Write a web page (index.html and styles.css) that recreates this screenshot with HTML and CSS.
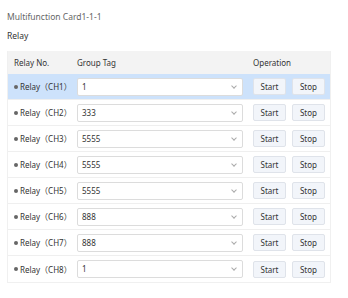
FILE: index.html
```html
<!doctype html>
<html lang="en">
  <head>
    <meta charset="UTF-8" />
    <meta name="viewport" content="width=device-width, initial-scale=1.0" />
    <title>Multifunction Card</title>
    <link rel="stylesheet" href="styles.css">
  </head>
  <body>
    <div class="page">
      <div class="title">Multifunction Card1-1-1</div>
      <div class="subtitle">Relay</div>

      <div class="relay-table">
        <div class="row head">
          <div class="c-no">Relay No.</div>
          <div class="c-tag">Group Tag</div>
          <div class="c-op">Operation</div>
        </div>

        <div class="row active">
          <div class="c-no"><span class="dot"></span>Relay（CH1）</div>
          <div class="c-tag"><div class="select">1<span class="arrow"></span></div></div>
          <div class="c-op"><button>Start</button><button>Stop</button></div>
        </div>
        <div class="row">
          <div class="c-no"><span class="dot"></span>Relay（CH2）</div>
          <div class="c-tag"><div class="select">333<span class="arrow"></span></div></div>
          <div class="c-op"><button>Start</button><button>Stop</button></div>
        </div>
        <div class="row">
          <div class="c-no"><span class="dot"></span>Relay（CH3）</div>
          <div class="c-tag"><div class="select">5555<span class="arrow"></span></div></div>
          <div class="c-op"><button>Start</button><button>Stop</button></div>
        </div>
        <div class="row">
          <div class="c-no"><span class="dot"></span>Relay（CH4）</div>
          <div class="c-tag"><div class="select">5555<span class="arrow"></span></div></div>
          <div class="c-op"><button>Start</button><button>Stop</button></div>
        </div>
        <div class="row">
          <div class="c-no"><span class="dot"></span>Relay（CH5）</div>
          <div class="c-tag"><div class="select">5555<span class="arrow"></span></div></div>
          <div class="c-op"><button>Start</button><button>Stop</button></div>
        </div>
        <div class="row">
          <div class="c-no"><span class="dot"></span>Relay（CH6）</div>
          <div class="c-tag"><div class="select">888<span class="arrow"></span></div></div>
          <div class="c-op"><button>Start</button><button>Stop</button></div>
        </div>
        <div class="row">
          <div class="c-no"><span class="dot"></span>Relay（CH7）</div>
          <div class="c-tag"><div class="select">888<span class="arrow"></span></div></div>
          <div class="c-op"><button>Start</button><button>Stop</button></div>
        </div>
        <div class="row">
          <div class="c-no"><span class="dot"></span>Relay（CH8）</div>
          <div class="c-tag"><div class="select">1<span class="arrow"></span></div></div>
          <div class="c-op"><button>Start</button><button>Stop</button></div>
        </div>
      </div>
    </div>
  </body>
</html>
```

FILE: styles.css
```css
body {
  margin: 0;
  font-family: "Noto Sans", "Noto Sans CJK SC", sans-serif;
  font-size: 8px;
  color: #333;
  background-color: #fff;
}

.page {
  padding: 11px 7px 0 7px;
}

.title {
  color: #666;
  line-height: 12px;
  font-size: 8.5px;
}

.subtitle {
  margin-top: 7px;
  line-height: 12px;
  font-size: 8.5px;
}

.relay-table {
  margin-top: 9px;
  width: 324px;
  border: 1px solid #f0f0f0;
  border-top: none;
  box-sizing: border-box;
}

.row {
  display: flex;
  align-items: center;
  height: 26px;
  border-bottom: 1px solid #efefef;
  box-sizing: border-box;
}

.row.head {
  height: 23px;
  background-color: #f3f3f3;
  border-bottom: none;
}

.row.active {
  background-color: #cde2fb;
}

.row:last-child {
  border-bottom: none;
}

.c-no {
  width: 68px;
  padding-left: 6px;
  box-sizing: border-box;
  display: flex;
  align-items: center;
}

.c-tag {
  width: 176px;
  padding-left: 1px;
  box-sizing: border-box;
}

.c-op {
  flex: 1;
  padding-left: 1px;
  display: flex;
  gap: 6px;
}

.dot {
  width: 4px;
  height: 4px;
  border-radius: 50%;
  background-color: #666;
  margin-right: 2px;
}

.select {
  position: relative;
  width: 166px;
  height: 18px;
  line-height: 16px;
  padding-left: 4px;
  border: 1px solid #dcdcdc;
  border-radius: 2px;
  background-color: #fff;
  box-sizing: border-box;
}

.arrow {
  position: absolute;
  right: 6px;
  top: 5px;
  width: 3px;
  height: 3px;
  border-right: 1px solid #aaa;
  border-bottom: 1px solid #aaa;
  transform: rotate(45deg);
}

button {
  width: 33px;
  height: 17px;
  padding: 0;
  font-family: inherit;
  font-size: 8px;
  color: #333;
  background-color: #f2f5fa;
  border: 1px solid #dfe3ea;
  border-radius: 2px;
  cursor: pointer;
}
```
